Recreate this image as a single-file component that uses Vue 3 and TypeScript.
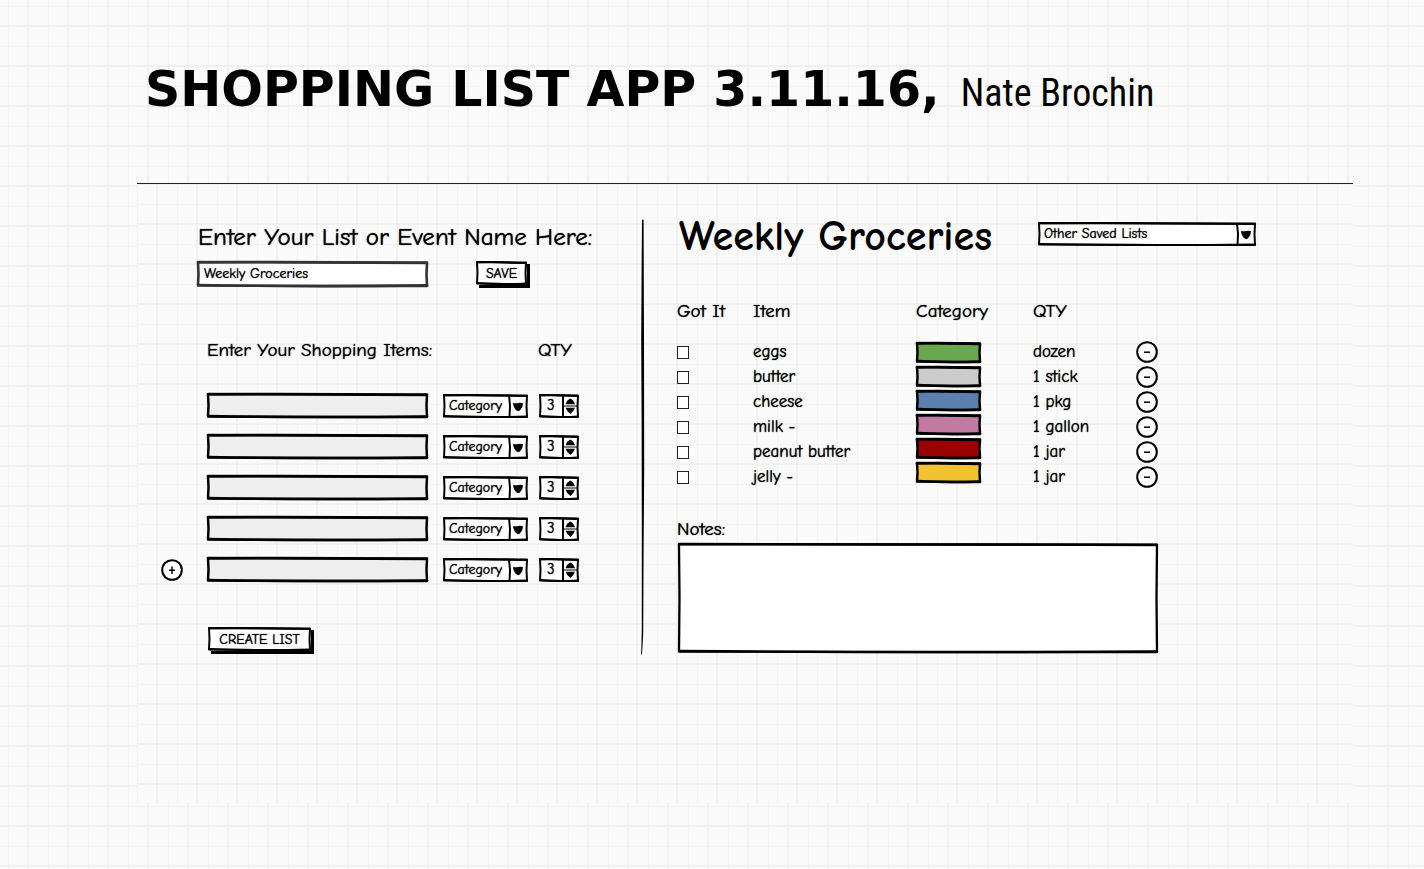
<script setup lang="ts">
import { h, ref } from 'vue'

interface Grocery {
  name: string
  color: string
  qty: string
  got: boolean
}

const listName = ref('Weekly Groceries')
const notes = ref('')
const entries = ref(Array.from({ length: 5 }, () => ({ text: '', category: 'Category', qty: '3' })))
const groceries = ref<Grocery[]>([
  { name: 'eggs', color: '#6aa84f', qty: 'dozen', got: false },
  { name: 'butter', color: '#cccccc', qty: '1 stick', got: false },
  { name: 'cheese', color: '#5b80ae', qty: '1 pkg', got: false },
  { name: 'milk -', color: '#c27ba0', qty: '1 gallon', got: false },
  { name: 'peanut butter', color: '#990000', qty: '1 jar', got: false },
  { name: 'jelly -', color: '#f1c232', qty: '1 jar', got: false },
])

// Hand-drawn rectangle: an uneven outline with a second, bowed stroke over it.
const Frame = (p: { w: number; h: number; fill?: string; ink?: string; pen?: number }) => {
  const { w, h: t, fill = '#fff', ink = '#000', pen = 2 } = p
  const line = { stroke: ink, 'stroke-width': pen, 'stroke-linejoin': 'round', 'stroke-linecap': 'round' }
  return h('svg', { class: 'frame', viewBox: `0 0 ${w} ${t}`, preserveAspectRatio: 'none', 'aria-hidden': 'true' }, [
    h('path', { d: `M1 1 L${w * 0.5} 1.5 L${w - 1} 2 L${w - 1.5} ${t * 0.5} L${w - 1} ${t - 1} L${w * 0.55} ${t - 1} L1 ${t - 1.5} L1.5 ${t * 0.5} Z`, fill, ...line }),
    h('path', { d: `M1 1.3 Q${w * 0.3} 0.6 ${w - 1} 1.6 M1.4 ${t - 2} Q${w * 0.5} ${t} ${w - 1} ${t - 1.6}`, fill: 'none', ...line }),
  ])
}
Frame.props = ['w', 'h', 'fill', 'ink', 'pen']
</script>

<template>
  <div class="page">
    <header class="banner">
      <h1 class="title">SHOPPING LIST APP 3.11.16, <span class="author">Nate Brochin</span></h1>
    </header>

    <main class="board">
      <form class="maker" @submit.prevent>
        <label class="lead" for="list-name">Enter Your List or Event Name Here:</label>
        <div class="name-row">
          <div class="box name-box">
            <Frame :w="231" :h="26" ink="#333" :pen="2.6" />
            <input id="list-name" v-model="listName" class="field" type="text" />
          </div>
          <button class="push save" type="button"><Frame :w="51" :h="24" /><span>SAVE</span></button>
        </div>

        <div class="labels">
          <span>Enter Your Shopping Items:</span>
          <span class="qty-label">QTY</span>
        </div>

        <div class="entries">
          <div v-for="(e, i) in entries" :key="i" class="entry">
            <button v-if="i === entries.length - 1" class="round" type="button" aria-label="Add item">
              <svg viewBox="0 0 22 22" aria-hidden="true"><path class="ring" d="M11 1.2 C16 1 20.8 5 20.8 10.8 C21 16.5 16.5 20.8 11 20.8 C5.5 20.8 1.2 16.5 1.2 11 C1.2 5.5 5.5 1.3 11 1.2 Z" /><path class="mark" d="M11 7.5 V15 M8 11.2 H14" /></svg>
            </button>
            <span v-else class="blank"></span>
            <div class="box item-box">
              <Frame :w="221" :h="25" fill="#eee" :pen="2.5" />
              <input v-model="e.text" class="field" type="text" :aria-label="`Item ${i + 1}`" />
            </div>
            <div class="box cat-box">
              <Frame :w="85" :h="24" />
              <select v-model="e.category" class="field" :aria-label="`Category of item ${i + 1}`">
                <option>Category</option>
              </select>
              <svg class="drop" viewBox="0 0 20 24" aria-hidden="true"><path class="rule" d="M1 1 L2 12 L1.5 23" /><path d="M5 9 Q8 9.6 10 9 Q13 8.300 15 9.200 Q14.800 13 13 15 Q11.500 17.200 10 17.200 Q8 17 6.500 14 Q5.200 11.500 5 9 Z" /></svg>
            </div>
            <div class="box num-box">
              <Frame :w="40" :h="24" />
              <input v-model="e.qty" class="field" type="text" inputmode="numeric" :aria-label="`Quantity of item ${i + 1}`" />
              <svg class="spin" viewBox="0 0 18 24" aria-hidden="true"><path class="rule" d="M2 1 L2 23" /><path class="hair" d="M3 12 H16" /><path d="M4.500 10.300 Q6 6 9 4.500 Q12.500 5.500 14 10.300 Z M4.500 13.800 H14 Q12.500 17.500 9.500 20 Q6 18 4.500 13.800 Z" /></svg>
            </div>
          </div>
        </div>

        <button class="push create" type="submit"><Frame :w="103" :h="24" /><span>CREATE LIST</span></button>
      </form>

      <svg class="divider" viewBox="0 0 4 436" preserveAspectRatio="none" aria-hidden="true">
        <path d="M1 1 Q2 0 2.600 1 L2.800 60 L3 120 L3.200 250 L2.600 330 L2.200 415 L1 436 L0.200 435 L0.800 410 L0.800 300 L0.600 200 L0.200 120 L0.600 50 Z" />
      </svg>

      <section class="list">
        <div class="list-head">
          <h2 class="list-title">Weekly Groceries</h2>
          <div class="box saved-box">
            <Frame :w="218" :h="24" />
            <select class="field" aria-label="Other saved lists"><option>Other Saved Lists</option></select>
            <svg class="drop" viewBox="0 0 20 24" aria-hidden="true"><path class="rule" d="M1 1 L2 12 L1.500 23" /><path d="M5 9 Q8 9.600 10 9 Q13 8.300 15 9.200 Q14.800 13 13 15 Q11.500 17.200 10 17.200 Q8 17 6.500 14 Q5.200 11.500 5 9 Z" /></svg>
          </div>
        </div>

        <table class="grid">
          <thead>
            <tr><th class="c-got">Got It</th><th class="c-item">Item</th><th class="c-cat">Category</th><th class="c-qty">QTY</th><td class="c-act"></td></tr>
          </thead>
          <tbody>
            <tr v-for="(g, i) in groceries" :key="g.name">
              <td><input v-model="g.got" class="tick" type="checkbox" :aria-label="`Got ${g.name}`" /></td>
              <td>{{ g.name }}</td>
              <td v-if="i === 0" :rowspan="groceries.length" class="swatches">
                <span v-for="s in groceries" :key="s.name" class="box swatch"><Frame :w="65" :h="21" :fill="s.color" :pen="2.5" /></span>
              </td>
              <td>{{ g.qty }}</td>
              <td>
                <button class="round" type="button" :aria-label="`Remove ${g.name}`">
                  <svg viewBox="0 0 22 22" aria-hidden="true"><path class="ring" d="M11 1.2 C16 1 20.8 5 20.8 10.8 C21 16.5 16.5 20.8 11 20.8 C5.5 20.8 1.2 16.5 1.2 11 C1.2 5.5 5.5 1.3 11 1.2 Z" /><path class="mark" d="M8 11.2 H14" /></svg>
                </button>
              </td>
            </tr>
          </tbody>
        </table>

        <label class="notes-label" for="notes">Notes:</label>
        <div class="box notes-box">
          <Frame :w="480" :h="110" :pen="2.3" />
          <textarea id="notes" v-model="notes" class="field"></textarea>
        </div>
      </section>
    </main>
  </div>
</template>

<style>
body {
  margin: 0;
  background: #fafafa;
}
</style>

<style scoped>
.page,
.board {
  background-color: #fafafa;
  background-image:
    linear-gradient(90deg, #f1f1f1 2px, transparent 2px),
    linear-gradient(#f1f1f1 2px, transparent 2px),
    linear-gradient(90deg, #f4f4f4 1px, transparent 1px),
    linear-gradient(#f4f4f4 1px, transparent 1px);
  background-size: 40px 40px;
}
.page {
  box-sizing: border-box;
  min-height: 100vh;
  padding: 0 71px 64px 137px;
  background-position: 27px 0, 0 25px, 8px 0, 0 6px;
  color: #000;
  font-family: "Comic Neue", Lato, sans-serif;
}
.banner {
  box-sizing: border-box;
  height: 183px;
  padding: 58px 0 0 8px;
}
.title {
  margin: 0;
  font: 700 49px/64px "DejaVu Sans", sans-serif;
  white-space: nowrap;
}
.author {
  margin-left: 4px;
  font: 400 38px/64px "Roboto Condensed", "Open Sans Condensed", sans-serif;
}
.board {
  display: grid;
  grid-template-columns: 504fr 4px 708fr;
  align-items: start;
  box-sizing: border-box;
  min-height: 620px;
  border-top: 1px solid #222;
  background-position: 19px 0, 0 39px, 0 0, 0 20px;
  text-shadow: 0 0 1px #000;
}

.box {
  position: relative;
  display: block;
}
.frame {
  position: absolute;
  inset: 0;
  width: 100%;
  height: 100%;
  overflow: visible;
}
.field {
  position: relative;
  box-sizing: border-box;
  display: block;
  width: 100%;
  height: 100%;
  margin: 0;
  padding: 0 6px;
  border: 0;
  outline: 0;
  background: transparent;
  color: #000;
  font: inherit;
  text-shadow: inherit;
  appearance: none;
  resize: none;
}
.push {
  position: relative;
  height: 24px;
  padding: 1px 0 0;
  border: 0;
  background: none;
  box-shadow: 3px 3px 0 #000;
  color: #000;
  font: 400 14px/24px "Comic Neue", Lato, sans-serif;
  text-shadow: inherit;
}
.push span {
  position: relative;
}
.round {
  display: block;
  width: 22px;
  height: 22px;
  padding: 0;
  border: 0;
  background: none;
}
.round svg {
  display: block;
}
.ring {
  fill: #fff;
  stroke: #000;
  stroke-width: 2;
}
.mark {
  fill: none;
  stroke: #000;
  stroke-width: 1.5;
}
.drop,
.spin {
  position: absolute;
  top: 0;
  right: 0;
  height: 24px;
  pointer-events: none;
}
.drop {
  width: 20px;
}
.spin {
  width: 18px;
}
.rule {
  fill: none;
  stroke: #000;
  stroke-width: 2;
}
.hair {
  fill: none;
  stroke: #000;
  stroke-width: 1;
}

.maker {
  padding: 37px 0 0 24px;
}
.lead {
  display: block;
  margin-left: 37px;
  font-size: 25px;
  line-height: 32px;
}
.name-row {
  display: flex;
  gap: 48px;
  margin: 8px 0 0 36px;
}
.name-box {
  width: 231px;
  height: 26px;
  font-size: 14px;
}
.name-box .field {
  padding: 0 7px 2px;
}
.save {
  width: 51px;
}
.labels {
  display: flex;
  margin: 51px 0 0 46px;
  font-size: 19px;
  line-height: 24px;
}
.labels span:first-child {
  width: 331px;
}
.entries {
  display: grid;
  gap: 16px;
  margin-top: 31px;
}
.entry {
  display: flex;
  align-items: center;
  height: 25px;
}
.blank {
  width: 22px;
}
.item-box {
  width: 221px;
  height: 25px;
  margin-left: 24px;
}
.cat-box {
  width: 85px;
  height: 24px;
  margin-left: 15px;
  font-size: 14px;
}
.num-box {
  width: 40px;
  height: 24px;
  margin-left: 11px;
  font-size: 15px;
}
.num-box .field {
  padding: 0 8px 2px;
}
.create {
  display: block;
  width: 103px;
  margin: 45px 0 0 47px;
}

.divider {
  width: 4px;
  height: 436px;
  margin-top: 35px;
}

.list {
  padding: 33px 0 0 32px;
}
.list-head {
  display: flex;
  align-items: flex-start;
}
.list-title {
  box-sizing: border-box;
  width: 361px;
  margin: 0;
  padding-left: 2px;
  font-size: 42px;
  line-height: 40px;
  font-weight: 700;
  text-shadow: none;
  white-space: nowrap;
}
.saved-box {
  width: 218px;
  height: 24px;
  margin-top: 5px;
  font-size: 14px;
}
.saved-box .field {
  padding: 0 6px 2px;
}
.grid {
  margin-top: 42px;
  border-collapse: collapse;
  font-size: 17px;
}
.grid th {
  height: 24px;
  padding: 0 0 16px;
  font-size: 19px;
  font-weight: 400;
  line-height: 24px;
  text-align: left;
}
.grid td {
  height: 25px;
  padding: 0;
  line-height: 24px;
}
.c-got {
  width: 76px;
}
.c-item {
  width: 163px;
}
.c-cat {
  width: 117px;
}
.c-qty {
  width: 103px;
}
.c-act {
  width: 22px;
}
.tick {
  display: block;
  box-sizing: border-box;
  width: 12px;
  height: 13px;
  margin: 1px 0 0;
  border: 1px solid #222;
  background: #fff;
  appearance: none;
}
.tick:checked {
  background: #222;
}
.grid .swatches {
  padding-top: 3px;
  vertical-align: top;
}
.swatch {
  width: 65px;
  height: 21px;
  margin-bottom: 3px;
}
.notes-label {
  display: block;
  margin-top: 28px;
  font-size: 19px;
  line-height: 24px;
}
.notes-box {
  width: 480px;
  height: 110px;
  margin: 2px 0 0 1px;
}
</style>
